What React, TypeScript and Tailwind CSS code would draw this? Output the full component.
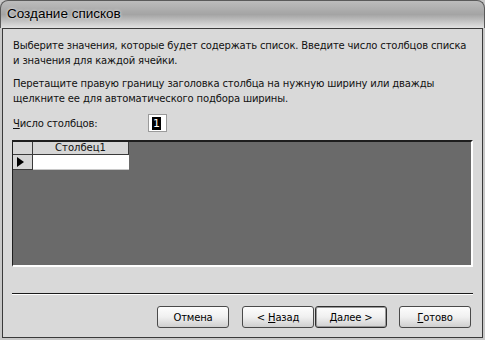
import React from 'react';

const font = { fontFamily: '"DejaVu Sans", Verdana, sans-serif' };

function Btn({ children, primary }: { children: React.ReactNode; primary?: boolean }) {
  return (
    <button
      className={`w-[72px] h-[22px] rounded-[3px] border text-[10px] tracking-[-0.15px] text-black bg-gradient-to-b from-[#fdfdfd] via-[#f0f0f0] to-[#cfcfcf] flex items-center justify-center ${primary ? 'border-[#2e2e2e] shadow-[inset_0_0_0_1px_#9a9a9a]' : 'border-[#4a4a4a]'}`}
    >
      <span className="whitespace-pre">{children}</span>
    </button>
  );
}

export default function App() {
  return (
    <div className="w-[485px] h-[340px] bg-[#c8c8c8] flex flex-col" style={font}>
      {/* Title bar */}
      <div className="h-[28px] shrink-0 rounded-t-[8px] border border-b-0 border-[#5a5a5a] bg-gradient-to-b from-[#bcbcbc] via-[#a4a4a4] to-[#e2e2e2] flex items-center pl-[6px]">
        <span className="text-[13.5px] text-black [text-shadow:0_0_3px_#ffffff]" style={{ fontFamily: '"Liberation Sans", Arial, sans-serif' }}>Создание списков</span>
      </div>

      {/* Body */}
      <div className="flex-1 mx-[2px] mb-[2px] border border-[#3a3a3a] bg-[#d9d9d9] flex flex-col px-[10px]">
        <div className="pt-[9px] text-[10px] tracking-[-0.15px] leading-[15px] text-[#111]">
          <p>Выберите значения, которые будет содержать список. Введите число столбцов списка<br />и значения для каждой ячейки.</p>
          <p className="mt-[8px]">Перетащите правую границу заголовка столбца на нужную ширину или дважды<br />щелкните ее для автоматического подбора ширины.</p>
        </div>

        <div className="mt-[8px] flex items-center h-[18px] text-[10px] tracking-[-0.15px] text-[#111]">
          <span className="w-[135px]"><span className="underline">Ч</span>исло столбцов:</span>
          <div className="w-[19px] h-[18px] bg-white border border-[#9a9a9a] flex items-center pl-[3px]">
            <span className="bg-black text-white leading-[13px] px-[1px] text-[11px]">1</span>
          </div>
        </div>

        {/* Datasheet */}
        <div className="mt-[8px] mx-[-1px] h-[127px] bg-[#6a6a6a] border-t-2 border-l border-t-[#1e1e1e] border-l-[#1e1e1e] border-b-2 border-r-2 border-b-white border-r-white">
          <div className="flex h-[13px]">
            <div className="w-[20px] bg-[#d6d6d6] border-r border-b border-[#3a3a3a]" />
            <div className="w-[96px] bg-[#d6d6d6] border-r border-b border-[#3a3a3a] text-[10px] leading-[12px] text-center text-[#111]">Столбец1</div>
          </div>
          <div className="flex h-[15px]">
            <div className="w-[20px] bg-[#d6d6d6] border-r border-b border-[#3a3a3a] flex items-center pl-[4px]">
              <svg width="7" height="10" viewBox="0 0 7 10"><path d="M0 0 L7 5 L0 10 Z" fill="#000" /></svg>
            </div>
            <div className="w-[96px] bg-white border-b border-[#c8c8c8]" />
          </div>
        </div>

        <div className="mt-[26px] h-[2px] border-t border-[#1a1a1a] border-b border-b-white mx-[-1px]" />

        <div className="mt-[11px] flex justify-end pr-[1px]">
          <Btn>Отмена</Btn>
          <div className="w-[13px]" />
          <Btn>{'< '}<span className="underline">Н</span>азад</Btn>
          <div className="w-[1px]" />
          <Btn primary><span className="underline">Д</span>алее &gt;</Btn>
          <div className="w-[12px]" />
          <Btn><span className="underline">Г</span>отово</Btn>
        </div>
      </div>
    </div>
  );
}
